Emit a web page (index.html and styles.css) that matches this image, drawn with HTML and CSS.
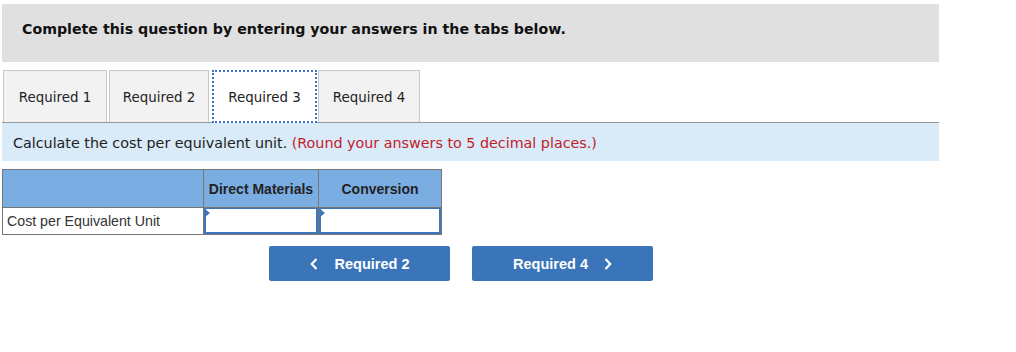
FILE: index.html
```html
<!DOCTYPE html>
<html>
<head>
  <title>Required 3</title>
  <link rel="stylesheet" href="styles.css">
</head>
<body>
<div class="page">
  <div class="banner">Complete this question by entering your answers in the tabs below.</div>

  <div class="tabs">
    <div class="tab t1">Required 1</div>
    <div class="tab t2">Required 2</div>
    <div class="tab t3 active">Required 3</div>
    <div class="tab t4">Required 4</div>
  </div>

  <div class="prompt">Calculate the cost per equivalent unit. <span class="hint">(Round your answers to 5 decimal places.)</span></div>

  <table class="grid">
    <tr class="head">
      <th class="label-col"></th>
      <th class="dm-col">Direct Materials</th>
      <th class="cv-col">Conversion</th>
    </tr>
    <tr>
      <td class="label">Cost per Equivalent Unit</td>
      <td class="entry"><div class="box"></div></td>
      <td class="entry"><div class="box"></div></td>
    </tr>
  </table>

  <div class="nav">
    <button class="nav-btn"><svg class="chev left" width="8" height="12" viewBox="0 0 8 12"><path d="M6.5 1 L1.8 6 L6.5 11" fill="none" stroke="#fff" stroke-width="2.2"/></svg>Required 2</button>
    <button class="nav-btn">Required 4<svg class="chev right" width="8" height="12" viewBox="0 0 8 12"><path d="M1.5 1 L6.2 6 L1.5 11" fill="none" stroke="#fff" stroke-width="2.2"/></svg></button>
  </div>
</div>
</body>
</html>
```

FILE: styles.css
```css
body {
  margin: 0;
  padding: 4px 2px;
  background: #fff;
}
.page {
  width: 937px;
}
.banner {
  background: #e0e0e0;
  height: 58px;
  padding-left: 20px;
  font-family: "DejaVu Sans", Verdana, sans-serif;
  font-weight: bold;
  font-size: 14.2px;
  line-height: 51px;
  color: #111;
}
.tabs {
  display: flex;
  margin-top: 8px;
  padding-left: 1px;
  border-bottom: 1px solid #999;
  height: 52px;
}
.tab {
  box-sizing: border-box;
  height: 52px;
  background: #f2f2f2;
  border: 1px solid #c8c8c8;
  border-bottom: none;
  font-family: "DejaVu Sans", Verdana, sans-serif;
  font-size: 13.4px;
  color: #222;
  text-align: center;
  line-height: 54px;
}
.t1 { width: 104px; margin-right: 2px; }
.t2 { width: 100px; margin-right: 3px; }
.t3 { width: 105px; margin-right: 1px; }
.t4 { width: 102px; }
.tab.active {
  background: #fff;
  border: 2px dotted #3a74c2;
  height: 53px;
  line-height: 52px;
}
.prompt {
  background: #d9eaf8;
  height: 38px;
  padding-left: 11px;
  font-family: "DejaVu Sans", Verdana, sans-serif;
  font-size: 14.3px;
  line-height: 40px;
  color: #222;
}
.hint {
  color: #c3202a;
}
.grid {
  margin-top: 8px;
  border-collapse: collapse;
  font-family: "Liberation Sans", Arial, sans-serif;
}
.grid th, .grid td {
  border: 1px solid #777;
  padding: 0;
}
.head th {
  background: #7aaee3;
  height: 37px;
  font-size: 14px;
  font-weight: bold;
  color: #222;
}
.label-col { width: 200px; }
.dm-col { width: 114px; }
.cv-col { width: 122px; }
.label {
  height: 26px;
  font-size: 14.2px;
  color: #333;
  padding-left: 4px !important;
}
.entry {
  position: relative;
}
.box {
  box-sizing: border-box;
  height: 26px;
  border: 2px solid #3f76bb;
  border-top-width: 1px;
}
.entry::before {
  content: "";
  position: absolute;
  top: 1px;
  left: 1px;
  border-top: 4px solid transparent;
  border-bottom: 4px solid transparent;
  border-left: 5px solid #3f76bb;
}
.nav {
  display: flex;
  gap: 22px;
  margin-top: 11px;
  padding-left: 267px;
}
.nav-btn {
  display: flex;
  align-items: center;
  justify-content: center;
  width: 181px;
  height: 35px;
  border: none;
  border-radius: 2px;
  background: #3a75ba;
  color: #fff;
  font-family: "Liberation Sans", Arial, sans-serif;
  font-weight: bold;
  font-size: 14.5px;
}
.chev.left { margin-right: 17px; }
.chev.right { margin-left: 16px; }
```
